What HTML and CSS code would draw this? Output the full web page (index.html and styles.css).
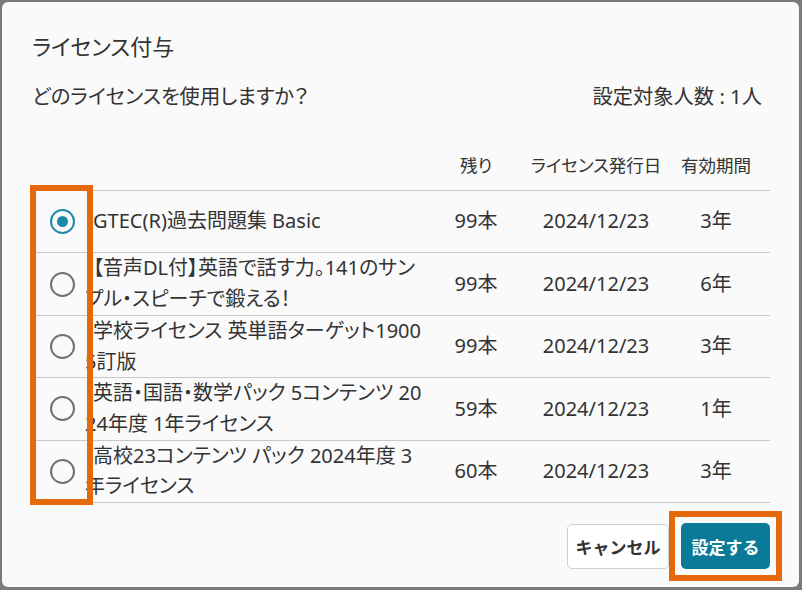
FILE: index.html
```html
<!DOCTYPE html>
<html>
<head>
  <meta charset="utf-8">
  <title>ライセンス付与</title>
  <link rel="stylesheet" href="styles.css">
</head>
<body>

<div class="overlay">
  <div class="dialog">
    <h3 class="dialog-title">ライセンス付与</h3>

    <div class="dialog-lead">
      <p>どのライセンスを使用しますか？</p>
      <p>設定対象人数 : 1人</p>
    </div>

    <!-- License list -->
    <div class="license-list">
      <table class="license-table">
        <thead>
          <tr>
            <th class="col-radio"></th>
            <th class="col-name"></th>
            <th class="col-remain">残り</th>
            <th class="col-date">ライセンス発行日</th>
            <th class="col-period">有効期間</th>
          </tr>
        </thead>
        <tbody>
          <tr>
            <td><span class="radio checked"></span></td>
            <td class="name">GTEC(R)過去問題集 Basic</td>
            <td>99本</td>
            <td>2024/12/23</td>
            <td class="period">3年</td>
          </tr>
          <tr>
            <td><span class="radio"></span></td>
            <td class="name">【音声DL付】英語で話す力。141のサンプル・スピーチで鍛える！</td>
            <td>99本</td>
            <td>2024/12/23</td>
            <td class="period">6年</td>
          </tr>
          <tr>
            <td><span class="radio"></span></td>
            <td class="name">学校ライセンス 英単語ターゲット1900 5訂版</td>
            <td>99本</td>
            <td>2024/12/23</td>
            <td class="period">3年</td>
          </tr>
          <tr>
            <td><span class="radio"></span></td>
            <td class="name">英語・国語・数学パック 5コンテンツ 2024年度 1年ライセンス</td>
            <td>59本</td>
            <td>2024/12/23</td>
            <td class="period">1年</td>
          </tr>
          <tr>
            <td><span class="radio"></span></td>
            <td class="name">高校23コンテンツ パック 2024年度 3年ライセンス</td>
            <td>60本</td>
            <td>2024/12/23</td>
            <td class="period">3年</td>
          </tr>
        </tbody>
      </table>
      <div class="highlight radio-highlight"></div>
    </div>

    <div class="dialog-actions">
      <button class="btn btn-cancel">キャンセル</button>
      <span class="highlight-wrap"><button class="btn btn-primary">設定する</button></span>
    </div>
  </div>
</div>

</body>
</html>
```

FILE: styles.css
```css
body {
  margin: 0;
  background-color: #7b7b7b;
  font-family: "Noto Sans", "Noto Sans CJK JP", sans-serif;
  font-feature-settings: "palt";
  color: #333;
}

.overlay {
  padding: 2px;
}

.dialog {
  width: 797px;
  height: 585px;
  box-sizing: border-box;
  padding: 29px 29px 6px 30px;
  background-color: #fafafa;
  border-radius: 6px;
}

.dialog-title {
  margin: 0;
  font-size: 22px;
  font-weight: normal;
  line-height: 31px;
}

.dialog-lead {
  display: flex;
  justify-content: space-between;
  margin-top: 18px;
  padding-right: 8px;
  font-size: 20.3px;
  line-height: 33px;
}

.dialog-lead p {
  margin: 0;
}

/* License table */
.license-list {
  position: relative;
  margin-top: 24px;
}

.license-table {
  width: 738px;
  border-collapse: collapse;
  table-layout: fixed;
}

.license-table th {
  padding: 14px 0 11px;
  font-size: 17.5px;
  font-weight: normal;
  line-height: 28px;
  text-align: center;
  border-bottom: 1px solid #c9c9c9;
}

.col-radio { width: 53px; }
.col-name { width: 343px; }
.col-remain { width: 96px; }
.col-date { width: 144px; }
.col-period { width: 96px; }

.license-table th.col-period,
.license-table td.period {
  padding-right: 6px;
}

.license-table td {
  height: 61.4px;
  padding: 0;
  font-size: 20px;
  line-height: 30.7px;
  text-align: center;
  vertical-align: middle;
  border-bottom: 1px solid #c9c9c9;
}

.license-table td.name {
  text-align: left;
  text-indent: 8px;
  word-break: break-all;
}

.radio {
  display: block;
  position: relative;
  width: 25px;
  height: 25px;
  margin-left: 18px;
  box-sizing: border-box;
  border: 2px solid #707070;
  border-radius: 50%;
}

.radio.checked {
  border-color: #1a88a8;
}

.radio.checked::after {
  content: "";
  position: absolute;
  top: 5px;
  left: 5px;
  width: 11px;
  height: 11px;
  border-radius: 50%;
  background-color: #1a88a8;
}

/* Orange annotation frames */
.highlight {
  position: absolute;
  box-sizing: border-box;
  border: 6px solid #e5690b;
  pointer-events: none;
}

.radio-highlight {
  left: -2px;
  top: 48px;
  width: 63px;
  height: 320px;
}

.highlight-wrap {
  display: flex;
  padding: 6px;
  border: 6px solid #e5690b;
}

/* Buttons */
.dialog-actions {
  display: flex;
  justify-content: flex-end;
  align-items: center;
  margin-top: 8px;
  margin-right: -12px;
}

.btn {
  font-family: inherit;
  font-feature-settings: normal;
  font-size: 17px;
  font-weight: bold;
  border-radius: 5px;
  cursor: pointer;
}

.btn-cancel {
  width: 102px;
  height: 45px;
  background-color: #fff;
  color: #333;
  border: 1px solid #cfcfcf;
}

.btn-primary {
  width: 89px;
  height: 46px;
  background-color: #0b7a98;
  color: #fff;
  border: none;
}
```
